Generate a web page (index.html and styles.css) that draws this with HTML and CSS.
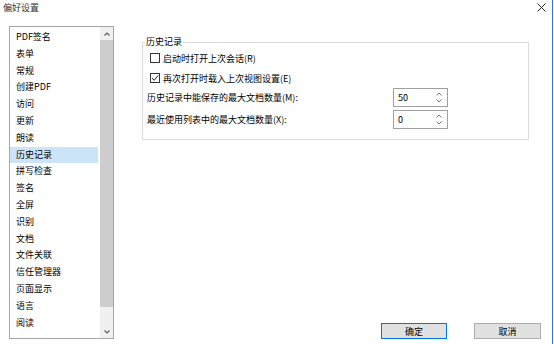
FILE: index.html
```html
<!DOCTYPE html>
<html lang="zh-CN">
<head>
    <meta charset="UTF-8">
    <meta name="viewport" content="width=device-width, initial-scale=1.0">
    <title>偏好设置</title>
    <link rel="stylesheet" href="styles.css">
</head>
<body>
    <div class="dialog">
        <div class="titlebar">
            <span class="title">偏好设置</span>
            <svg class="close" width="9" height="9" viewBox="0 0 9 9">
                <path d="M0.5 0.5 L8.5 8.5 M8.5 0.5 L0.5 8.5" stroke="#222" stroke-width="1" fill="none"/>
            </svg>
        </div>
        <div class="main">
            <div class="category-list">
                <ul class="items">
                    <li>PDF签名</li>
                    <li>表单</li>
                    <li>常规</li>
                    <li>创建PDF</li>
                    <li>访问</li>
                    <li>更新</li>
                    <li>朗读</li>
                    <li class="selected">历史记录</li>
                    <li>拼写检查</li>
                    <li>签名</li>
                    <li>全屏</li>
                    <li>识别</li>
                    <li>文档</li>
                    <li>文件关联</li>
                    <li>信任管理器</li>
                    <li>页面显示</li>
                    <li>语言</li>
                    <li>阅读</li>
                </ul>
                <div class="scrollbar">
                    <span class="scroll-btn">
                        <svg width="6" height="4" viewBox="0 0 6 4"><path d="M0.5 3.5 L3 1 L5.5 3.5" stroke="#606060" stroke-width="1.2" fill="none"/></svg>
                    </span>
                    <span class="thumb"></span>
                    <span class="scroll-btn">
                        <svg width="6" height="4" viewBox="0 0 6 4"><path d="M0.5 0.5 L3 3 L5.5 0.5" stroke="#606060" stroke-width="1.2" fill="none"/></svg>
                    </span>
                </div>
            </div>
            <div class="panel">
                <fieldset class="group">
                    <legend>历史记录</legend>
                    <div class="check-row">
                        <span class="checkbox"></span>
                        <span>启动时打开上次会话(R)</span>
                    </div>
                    <div class="check-row">
                        <span class="checkbox">
                            <svg width="8" height="8" viewBox="0 0 8 8"><path d="M1 4 L3.2 6.3 L7.2 1.3" stroke="#222" stroke-width="1" fill="none"/></svg>
                        </span>
                        <span>再次打开时载入上次视图设置(E)</span>
                    </div>
                    <div class="field-row">
                        <span class="field-label">历史记录中能保存的最大文档数量(M):</span>
                        <div class="spinner">
                            <span class="value">50</span>
                            <span class="spin-arrows">
                                <svg width="6" height="4" viewBox="0 0 6 4"><path d="M0.5 3.5 L3 1 L5.5 3.5" stroke="#777" stroke-width="1" fill="none"/></svg>
                                <svg width="6" height="4" viewBox="0 0 6 4"><path d="M0.5 0.5 L3 3 L5.5 0.5" stroke="#777" stroke-width="1" fill="none"/></svg>
                            </span>
                        </div>
                    </div>
                    <div class="field-row">
                        <span class="field-label">最近使用列表中的最大文档数量(X):</span>
                        <div class="spinner">
                            <span class="value">0</span>
                            <span class="spin-arrows">
                                <svg width="6" height="4" viewBox="0 0 6 4"><path d="M0.5 3.5 L3 1 L5.5 3.5" stroke="#777" stroke-width="1" fill="none"/></svg>
                                <svg width="6" height="4" viewBox="0 0 6 4"><path d="M0.5 0.5 L3 3 L5.5 0.5" stroke="#777" stroke-width="1" fill="none"/></svg>
                            </span>
                        </div>
                    </div>
                </fieldset>
                <div class="buttons">
                    <button class="btn default">确定</button>
                    <button class="btn">取消</button>
                </div>
            </div>
        </div>
    </div>
</body>
</html>
```

FILE: styles.css
```css
body{
    margin:0;
    padding:0;
    background:#fff;
    font-family:"Noto Sans CJK SC", "Noto Sans", sans-serif;
    font-size:9px;
    color:#000;
}

.dialog{
    box-sizing: border-box;
    width:553px;
    height:344px;
    border-right:1px solid #2b7cd3;
    background:#fff;
}

.titlebar{
    height:26px;
    display:flex;
    justify-content: space-between;
    align-items: flex-start;
    padding:0 6px 0 3px;
    box-sizing: border-box;
}

.title{
    line-height:13px;
    margin-top:1px;
    color:#333;
}

.close{
    margin-top:3px;
}

.main{
    display:flex;
    height:318px;
    padding-left:9px;
}

.category-list{
    box-sizing: border-box;
    width:105px;
    height:313px;
    border:1px solid #a6a6a6;
    display:flex;
}

.items{
    flex:1;
    list-style: none;
    margin:0;
    padding:2px 2px 0 0;
}

.items li{
    height:16.8px;
    line-height:16.8px;
    padding-left:6px;
    white-space: nowrap;
}

.items li.selected{
    background:#cce4f7;
}

.scrollbar{
    width:13px;
    background:#f0f0f0;
    display:flex;
    flex-direction: column;
}

.scroll-btn{
    height:13px;
    display:flex;
    align-items: center;
    justify-content: center;
}

.thumb{
    margin:0 0 18px 0;
    flex:1;
    background:#cdcdcd;
}

.panel{
    flex:1;
    display:flex;
    flex-direction: column;
    margin-left:28px;
    padding-right:11px;
}

.group{
    align-self: flex-start;
    box-sizing: border-box;
    width:387px;
    margin:10px 0 0 0;
    padding:0 0 7px 4px;
    border:1px solid #dcdcdc;
}

.group legend{
    margin-left:-2px;
    padding:0 1px;
    line-height:12px;
}

.check-row{
    height:20px;
    display:flex;
    align-items: center;
    padding-left:3px;
}

.checkbox{
    box-sizing: border-box;
    width:10px;
    height:10px;
    border:1px solid #333;
    margin-right:3px;
    display:flex;
    align-items: center;
    justify-content: center;
}

.field-row{
    display:flex;
    align-items: center;
    height:19px;
    margin-bottom:3px;
}

.field-label{
    width:246px;
}

.spinner{
    box-sizing: border-box;
    width:55px;
    height:19px;
    border:1px solid #a0a0a0;
    display:flex;
    align-items: center;
    justify-content: space-between;
    padding:0 5px 0 4px;
}

.spin-arrows{
    display:flex;
    flex-direction: column;
    gap:3px;
}

.spin-arrows svg{
    display:block;
}

.buttons{
    margin-top:auto;
    margin-bottom:5px;
    display:flex;
    justify-content: flex-end;
    gap:27px;
}

.btn{
    box-sizing: border-box;
    width:67px;
    height:16px;
    padding:0;
    border:1px solid #adadad;
    background:#e1e1e1;
    font-family:"Noto Sans CJK SC", "Noto Sans", sans-serif;
    font-size:9px;
    color:#000;
}

.btn.default{
    width:66px;
    border-color:#0078d7;
}
```
